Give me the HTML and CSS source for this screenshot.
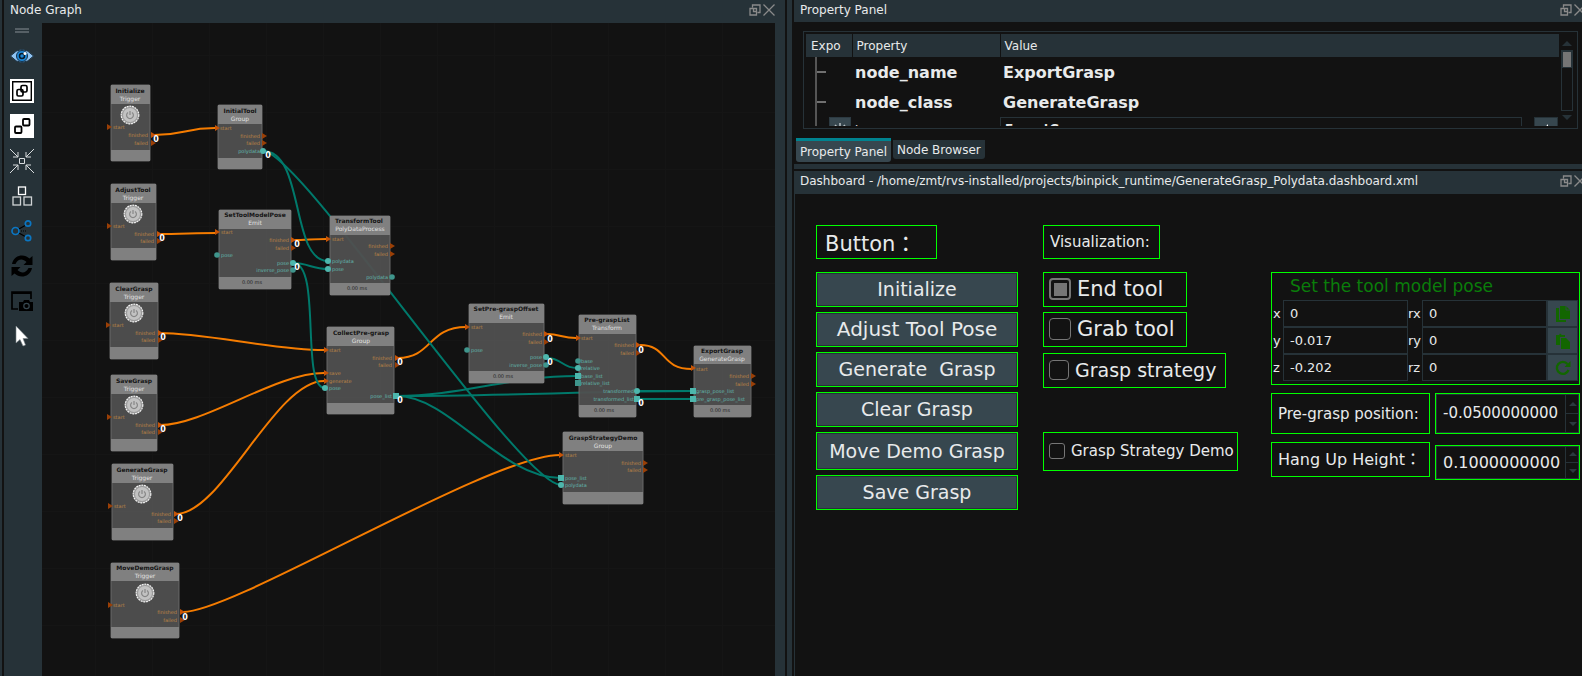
FILE: index.html
```html
<!DOCTYPE html>
<html lang="en">
<head>
<meta charset="utf-8">
<title>Node Graph</title>
<link rel="stylesheet" href="styles.css">
</head>
<body>
<svg class="defs" aria-hidden="true">
  <defs>
    <symbol id="float" viewBox="0 0 12 12"><path d="M3.500 3.500V1H11V8.500H8.500M1 4.500H7.500V11H1ZM4.500 4V7.500H8" /></symbol>
    <symbol id="close" viewBox="0 0 12 12"><path d="M.5 .5 11.500 11.500M11.500 .5 .5 11.500" /></symbol>
  </defs>
</svg>
<div class="app">
  <section class="graph-dock">
    <header class="dock-title">
      <h2>Node Graph</h2>
      <button class="icon-btn" aria-label="Float"><svg><use href="#float"/></svg></button>
      <button class="icon-btn" aria-label="Close"><svg><use href="#close"/></svg></button>
    </header>
    <div class="graph-body">
      <nav class="toolbar" aria-label="Graph tools">
        <span class="handle"></span>
        <button class="tool" aria-label="Show">
          <svg viewBox="0 0 24 24"><path d="M.5 12Q12-1 23.500 12 12 25 .5 12Z" fill="#8fc3f2" stroke="#1d3446"/><circle cx="12" cy="12" r="5.500" fill="#1e88d8" stroke="#14314a"/><circle cx="12" cy="12" r="2.500" fill="none" stroke="#0a1a28" stroke-width="1.500"/><circle cx="15" cy="9.500" r="1.500" fill="#fff"/></svg>
        </button>
        <button class="tool" aria-label="Group">
          <svg viewBox="0 0 24 24"><path d="M0 0H24V24H0Z" fill="#fff"/><g fill="none" stroke="#000"><path d="M2.700 2.700H21.300V21.300H2.700Z" stroke-width="1.400"/><rect x="7" y="10.500" width="6" height="6.500" rx="1.500" stroke-width="1.700"/><rect x="11" y="6.500" width="6" height="6.500" rx="1.500" stroke-width="1.700"/></g></svg>
        </button>
        <button class="tool" aria-label="Ungroup">
          <svg viewBox="0 0 24 24"><path d="M0 0H24V24H0Z" fill="#fff"/><g fill="none" stroke="#000" stroke-width="1.800"><rect x="5" y="12.500" width="6.500" height="6.500" rx="1"/><rect x="13" y="5" width="6.500" height="6.500" rx="1"/></g></svg>
        </button>
        <button class="tool" aria-label="Center">
          <svg viewBox="0 0 24 24" fill="none" stroke="#d8dcde"><path d="M9.500 9.500H14.500V14.500H9.500Z"/><path d="M0 0 8 8M24 0 16 8M0 24 8 16M24 24 16 16M8 3V8H3M16 3V8H21M8 21V16H3M16 21V16H21"/></svg>
        </button>
        <button class="tool" aria-label="Arrange">
          <svg viewBox="0 0 24 24" fill="none" stroke="#d0d4d6" stroke-width="1.300"><rect x="8.500" y="3" width="7" height="7.500" stroke="#fff"/><rect x="3" y="13" width="7.500" height="8"/><rect x="14" y="13" width="7.500" height="8"/></svg>
        </button>
        <button class="tool" aria-label="Link">
          <svg viewBox="0 0 24 24" fill="none"><path d="M8 10.500 16 6M8 13.500 16 18" stroke="#000" stroke-width="1.300"/><path d="M9 12H16" stroke="#000" stroke-dasharray="1 1"/><g stroke="#0b76c2" stroke-width="1.700"><circle cx="5.500" cy="12" r="3.500"/><circle cx="18" cy="4.500" r="2.700"/><circle cx="18" cy="19" r="2.700"/></g></svg>
        </button>
        <button class="tool" aria-label="Refresh">
          <svg viewBox="0 0 24 24" fill="#000"><path d="M2 10C3 4 8 1.500 12 1.500 15 1.500 17 2.500 19.500 4.500L22.500 2V11H13.500L16.500 8C13 4.500 8 4.500 5.500 10ZM22 14C21 20 16 22.500 12 22.500 9 22.500 7 21.500 4.500 19.500L1.500 22V13H10.500L7.500 16C11 19.500 16 19.500 18.500 14Z"/></svg>
        </button>
        <button class="tool" aria-label="Capture">
          <svg viewBox="0 0 24 24"><path d="M8 20H2V3H21V10" fill="none" stroke="#000" stroke-width="1.700"/><path d="M2 3H21V5H2Z"/><path d="M9 13H13L14 11H19L20 13H23V22H9Z"/><circle cx="16.500" cy="17" r="2.700" fill="none" stroke="#37474f" stroke-width="1.200"/></svg>
        </button>
        <button class="tool" aria-label="Select">
          <svg viewBox="0 0 24 24"><path d="M6 2V19L10 15.500 13 22 15.500 21 13 14.500H18Z" fill="#fff" stroke="#7b8388" stroke-width=".6"/></svg>
        </button>
      </nav>
      <div class="canvas">
        <svg class="graph" width="733" height="653" viewBox="42 23 733 653" role="img" aria-label="Node graph">
          <defs>
            <pattern id="grid" x="38" y="55" width="57" height="57" patternUnits="userSpaceOnUse"><path d="M0 .5H57M.5 0V57" stroke="#151515" fill="none"/></pattern>
            <g id="arr"><path d="M-2-3 3 0-2 3Z" fill="#9a3f06"/></g>
            <g id="arrOn"><path d="M-2-3 3 0-2 3Z" fill="#c65408"/></g>
            <g id="dot"><circle r="2.800" fill="#3f958c"/></g>
            <g id="dotOn"><circle r="3" fill="#4db6ac"/></g>
            <g id="sq"><path d="M-3-3H3V3H-3Z" fill="#3f958c"/></g>
            <g id="sqOn"><path d="M-3-3H3V3H-3Z" fill="#4db6ac"/></g>
            <g id="power"><circle r="8.800" fill="#9c9c9c" stroke="#f2f2f2" stroke-width="1.200" stroke-dasharray="2 .7"/><circle r="7" fill="#c2c2c2"/><path d="M-2-2.600A3.400 3.400 0 1 0 2-2.600M0-4V0" fill="none" stroke="#868686" stroke-width="1.200"/></g>
          </defs>
          <rect x="42" y="23" width="733" height="653" fill="url(#grid)"/>

          <g class="wire flow">
            <path d="M154 135C185 135 185 128 215 128"/>
            <path d="M159 234C178 234 198 233 216 233"/>
            <path d="M294 240C304 240 316 239 326 239"/>
            <path d="M160 333C205 333 275 350 324 350"/>
            <path d="M160 425C205 425 275 373 324 373"/>
            <path d="M176 514C222 514 275 381 324 381"/>
            <path d="M183 612C235 612 490 455 560 455"/>
            <path d="M398 358C432 358 428 327 466 327"/>
            <path d="M547 334C560 334 562 338 576 338"/>
            <path d="M640 345C668 345 660 369 692 369"/>
          </g>
          <g class="wire data">
            <path d="M263 151C305 151 290 261 328 261"/>
            <path d="M263 151C300 151 520 485 561 485"/>
            <path d="M293 263C308 263 312 269 328 269"/>
            <path d="M293 263C322 263 300 388 325 388"/>
            <path d="M397 396C460 396 510 376 577 376"/>
            <path d="M397 396C500 396 600 391 693 391"/>
            <path d="M397 396C450 396 500 478 561 478"/>
            <path d="M547 358C562 358 562 368 577 368"/>
            <path d="M637 391H693M637 399H693"/>
          </g>

          <g class="node" transform="translate(111 85)">
            <rect class="body" width="39" height="76" rx="1"/><path class="bar" d="M0 0H39V19H0ZM0 65H39V76H0Z"/>
            <text class="name" x="19" y="8">Initialize</text><text class="kind" x="19" y="16">Trigger</text><use href="#power" x="19" y="30"/>
            <text class="in" x="2" y="44">start</text><text class="out" x="37" y="52">finished</text><text class="out" x="37" y="60">failed</text>
          </g>
          <g class="node" transform="translate(111 184)">
            <rect class="body" width="45" height="76" rx="1"/><path class="bar" d="M0 0H45V19H0ZM0 64H45V76H0Z"/>
            <text class="name" x="22" y="8">AdjustTool</text><text class="kind" x="22" y="16">Trigger</text><use href="#power" x="22" y="30"/>
            <text class="in" x="2" y="44">start</text><text class="out" x="43" y="52">finished</text><text class="out" x="43" y="59">failed</text>
          </g>
          <g class="node" transform="translate(110 283)">
            <rect class="body" width="48" height="76" rx="1"/><path class="bar" d="M0 0H48V19H0ZM0 64H48V76H0Z"/>
            <text class="name" x="24" y="8">ClearGrasp</text><text class="kind" x="24" y="16">Trigger</text><use href="#power" x="24" y="30"/>
            <text class="in" x="2" y="44">start</text><text class="out" x="45" y="52">finished</text><text class="out" x="45" y="59">failed</text>
          </g>
          <g class="node" transform="translate(111 375)">
            <rect class="body" width="46" height="76" rx="1"/><path class="bar" d="M0 0H46V19H0ZM0 64H46V76H0Z"/>
            <text class="name" x="23" y="8">SaveGrasp</text><text class="kind" x="23" y="16">Trigger</text><use href="#power" x="23" y="30"/>
            <text class="in" x="2" y="44">start</text><text class="out" x="44" y="52">finished</text><text class="out" x="44" y="59">failed</text>
          </g>
          <g class="node" transform="translate(112 464)">
            <rect class="body" width="61" height="76" rx="1"/><path class="bar" d="M0 0H61V19H0ZM0 64H61V76H0Z"/>
            <text class="name" x="30" y="8">GenerateGrasp</text><text class="kind" x="30" y="16">Trigger</text><use href="#power" x="30" y="30"/>
            <text class="in" x="2" y="44">start</text><text class="out" x="59" y="52">finished</text><text class="out" x="59" y="59">failed</text>
          </g>
          <g class="node" transform="translate(111 563)">
            <rect class="body" width="68" height="75" rx="1"/><path class="bar" d="M0 0H68V18H0ZM0 64H68V75H0Z"/>
            <text class="name" x="34" y="7">MoveDemoGrasp</text><text class="kind" x="34" y="15">Trigger</text><use href="#power" x="34" y="30"/>
            <text class="in" x="2" y="44">start</text><text class="out" x="66" y="51">finished</text><text class="out" x="66" y="59">failed</text>
          </g>
          <g class="node" transform="translate(218 105)">
            <rect class="body" width="44" height="64" rx="1"/><path class="bar" d="M0 0H44V19H0ZM0 53H44V64H0Z"/>
            <text class="name" x="22" y="8">InitialTool</text><text class="kind" x="22" y="16">Group</text>
            <text class="in" x="2" y="25">start</text><text class="out" x="42" y="33">finished</text><text class="out" x="42" y="40">failed</text><text class="out d" x="42" y="48">polydata</text>
          </g>
          <g class="node" transform="translate(219 210)">
            <rect class="body" width="72" height="79" rx="1"/><path class="bar" d="M0 0H72V19H0ZM0 67H72V79H0Z"/>
            <text class="name" x="36" y="7">SetToolModelPose</text><text class="kind" x="36" y="15">Emit</text>
            <text class="in" x="2" y="24">start</text><text class="out" x="70" y="32">finished</text><text class="out" x="70" y="40">failed</text><text class="in d" x="2" y="47">pose</text><text class="out d" x="70" y="55">pose</text><text class="out d" x="70" y="62">inverse_pose</text><text class="time" x="33" y="74">0.00 ms</text>
          </g>
          <g class="node" transform="translate(330 216)">
            <rect class="body" width="60" height="79" rx="1"/><path class="bar" d="M0 0H60V19H0ZM0 67H60V79H0Z"/>
            <text class="name" x="29" y="7">TransformTool</text><text class="kind" x="30" y="15">PolyDataProcess</text>
            <text class="in" x="2" y="25">start</text><text class="out" x="58" y="32">finished</text><text class="out" x="58" y="40">failed</text><text class="in d" x="2" y="47">polydata</text><text class="in d" x="2" y="55">pose</text><text class="out d" x="58" y="63">polydata</text><text class="time" x="27" y="74">0.00 ms</text>
          </g>
          <g class="node" transform="translate(327 327)">
            <rect class="body" width="67" height="87" rx="1"/><path class="bar" d="M0 0H67V19H0ZM0 76H67V87H0Z"/>
            <text class="name" x="34" y="8">CollectPre-grasp</text><text class="kind" x="34" y="16">Group</text>
            <text class="in" x="2" y="25">start</text><text class="out" x="65" y="33">finished</text><text class="out" x="65" y="40">failed</text><text class="in" x="2" y="48">save</text><text class="in" x="2" y="56">generate</text><text class="in d" x="2" y="63">pose</text><text class="out d" x="65" y="71">pose_list</text>
          </g>
          <g class="node" transform="translate(469 304)">
            <rect class="body" width="75" height="79" rx="1"/><path class="bar" d="M0 0H75V19H0ZM0 67H75V79H0Z"/>
            <text class="name" x="37" y="7">SetPre-graspOffset</text><text class="kind" x="37" y="15">Emit</text>
            <text class="in" x="2" y="25">start</text><text class="out" x="73" y="32">finished</text><text class="out" x="73" y="40">failed</text><text class="in d" x="2" y="48">pose</text><text class="out d" x="73" y="55">pose</text><text class="out d" x="73" y="63">inverse_pose</text><text class="time" x="34" y="74">0.00 ms</text>
          </g>
          <g class="node" transform="translate(579 315)">
            <rect class="body" width="57" height="102" rx="1"/><path class="bar" d="M0 0H57V19H0ZM0 90H57V102H0Z"/>
            <text class="name" x="28" y="7">Pre-graspList</text><text class="kind" x="28" y="15">Transform</text>
            <text class="in" x="2" y="25">start</text><text class="out" x="55" y="32">finished</text><text class="out" x="55" y="40">failed</text><text class="in d" x="2" y="48">base</text><text class="in d" x="2" y="55">relative</text><text class="in d" x="2" y="63">base_list</text><text class="in d" x="2" y="70">relative_list</text><text class="out d" x="55" y="78">transformed</text><text class="out d" x="55" y="86">transformed_list</text><text class="time" x="25" y="97">0.00 ms</text>
          </g>
          <g class="node" transform="translate(694 346)">
            <rect class="body" width="57" height="71" rx="1"/><path class="bar" d="M0 0H57V18H0ZM0 59H57V71H0Z"/>
            <text class="name" x="28" y="7">ExportGrasp</text><text class="kind" x="28" y="15">GenerateGrasp</text>
            <text class="in" x="2" y="25">start</text><text class="out" x="55" y="32">finished</text><text class="out" x="55" y="40">failed</text><text class="in d" x="2" y="47">grasp_pose_list</text><text class="in d" x="2" y="55">pre_grasp_pose_list</text><text class="time" x="26" y="66">0.00 ms</text>
          </g>
          <g class="node" transform="translate(563 432)">
            <rect class="body" width="80" height="72" rx="1"/><path class="bar" d="M0 0H80V19H0ZM0 60H80V72H0Z"/>
            <text class="name" x="40" y="8">GraspStrategyDemo</text><text class="kind" x="40" y="16">Group</text>
            <text class="in" x="2" y="25">start</text><text class="out" x="78" y="33">finished</text><text class="out" x="78" y="40">failed</text><text class="in d" x="2" y="48">pose_list</text><text class="in d" x="2" y="55">polydata</text>
          </g>

          <g class="ports">
            <use href="#arr" x="109" y="127"/><use href="#arrOn" x="153" y="135"/><use href="#arr" x="153" y="143"/>
            <use href="#arr" x="109" y="226"/><use href="#arrOn" x="159" y="234"/><use href="#arr" x="159" y="241"/>
            <use href="#arr" x="108" y="325"/><use href="#arrOn" x="160" y="333"/><use href="#arr" x="160" y="340"/>
            <use href="#arr" x="109" y="417"/><use href="#arrOn" x="160" y="425"/><use href="#arr" x="160" y="432"/>
            <use href="#arr" x="110" y="506"/><use href="#arrOn" x="176" y="514"/><use href="#arr" x="176" y="521"/>
            <use href="#arr" x="110" y="605"/><use href="#arrOn" x="182" y="612"/><use href="#arr" x="182" y="620"/>
            <use href="#arrOn" x="217" y="128"/><use href="#arr" x="264" y="136"/><use href="#arr" x="264" y="143"/><use href="#dotOn" x="263" y="151"/>
            <use href="#arrOn" x="217" y="232"/><use href="#arrOn" x="293" y="240"/><use href="#arr" x="293" y="248"/><use href="#dot" x="217" y="255"/><use href="#dotOn" x="293" y="263"/><use href="#dot" x="293" y="270"/>
            <use href="#arrOn" x="328" y="239"/><use href="#arr" x="392" y="246"/><use href="#arr" x="392" y="254"/><use href="#dotOn" x="328" y="261"/><use href="#dotOn" x="328" y="269"/><use href="#dot" x="392" y="277"/>
            <use href="#arrOn" x="326" y="350"/><use href="#arrOn" x="397" y="358"/><use href="#arr" x="397" y="365"/><use href="#arrOn" x="326" y="373"/><use href="#arrOn" x="326" y="381"/><use href="#dotOn" x="325" y="388"/><use href="#sqOn" x="396" y="396"/>
            <use href="#arrOn" x="467" y="327"/><use href="#arrOn" x="546" y="334"/><use href="#arr" x="546" y="342"/><use href="#dot" x="467" y="350"/><use href="#dotOn" x="546" y="357"/><use href="#dot" x="546" y="365"/>
            <use href="#arrOn" x="578" y="338"/><use href="#arrOn" x="638" y="345"/><use href="#arr" x="638" y="353"/><use href="#dot" x="578" y="361"/><use href="#dotOn" x="578" y="368"/><use href="#sqOn" x="578" y="376"/><use href="#sq" x="578" y="383"/><use href="#dotOn" x="637" y="391"/><use href="#sqOn" x="637" y="399"/>
            <use href="#arrOn" x="693" y="368"/><use href="#arr" x="753" y="376"/><use href="#arr" x="753" y="384"/><use href="#sqOn" x="693" y="391"/><use href="#sqOn" x="693" y="399"/>
            <use href="#arrOn" x="561" y="455"/><use href="#arr" x="645" y="463"/><use href="#arr" x="645" y="470"/><use href="#sqOn" x="561" y="478"/><use href="#dotOn" x="561" y="485"/>
          </g>
          <g class="count">
            <text x="156" y="142">0</text><text x="162" y="241">0</text><text x="163" y="340">0</text><text x="163" y="432">0</text><text x="180" y="521">0</text><text x="185" y="620">0</text>
            <text x="268" y="158">0</text><text x="297" y="247">0</text><text x="297" y="270">0</text><text x="400" y="365">0</text><text x="400" y="403">0</text>
            <text x="550" y="342">0</text><text x="550" y="365">0</text><text x="641" y="353">0</text><text x="641" y="406">0</text>
          </g>
        </svg>
      </div>
      <div class="grip"></div>
    </div>
  </section>
  <div class="splitter"></div>

  <main class="right">
    <section class="property-dock">
      <header class="dock-title">
        <h2>Property Panel</h2>
        <button class="icon-btn" aria-label="Float"><svg><use href="#float"/></svg></button>
        <button class="icon-btn" aria-label="Close"><svg><use href="#close"/></svg></button>
      </header>
      <div class="tree">
        <div class="tree-view">
          <table class="props">
            <thead><tr><th class="c-expo">Expo</th><th class="c-prop">Property</th><th>Value</th></tr></thead>
            <tbody>
              <tr><td><span class="branch"></span></td><td>node_name</td><td>ExportGrasp</td></tr>
              <tr><td><span class="branch"></span></td><td>node_class</td><td>GenerateGrasp</td></tr>
              <tr class="cut">
                <td><div class="cut-cell"><span class="branch"></span><button class="gear" aria-label="Expose"><svg viewBox="0 0 14 14"><path d="M7 0V14M0 7H14M2 2 12 12M12 2 2 12" stroke="#b8c0c4" stroke-width="1.500"/></svg></button></div></td>
                <td><span class="small">browser</span></td>
                <td><div class="editor"><input aria-label="browser" value="ExportGrasp"><button aria-label="Browse"><svg viewBox="0 0 12 12"><path d="M3 6 8 0V12Z" fill="#fff"/></svg></button></div></td>
              </tr>
            </tbody>
          </table>
        </div>
        <div class="scroll"><span class="up"></span><div class="track"><span class="thumb"></span></div><span class="down"></span></div>
      </div>
      <nav class="tabs" role="tablist">
        <button class="tab active" role="tab" aria-selected="true">Property Panel</button>
        <button class="tab" role="tab">Node Browser</button>
      </nav>
    </section>
    <div class="hsplit"></div>
    <section class="dash-dock">
      <header class="dock-title">
        <h2>Dashboard - /home/zmt/rvs-installed/projects/binpick_runtime/GenerateGrasp_Polydata.dashboard.xml</h2>
        <button class="icon-btn" aria-label="Float"><svg><use href="#float"/></svg></button>
        <button class="icon-btn" aria-label="Close"><svg><use href="#close"/></svg></button>
      </header>
      <div class="dash">
        <div class="col actions">
          <div class="box heading">Button：</div>
          <button class="box cmd">Initialize</button>
          <button class="box cmd wide">Adjust Tool Pose</button>
          <button class="box cmd">Generate&nbsp; Grasp</button>
          <button class="box cmd">Clear Grasp</button>
          <button class="box cmd tall">Move Demo Grasp</button>
          <button class="box cmd">Save Grasp</button>
        </div>
        <div class="col visual">
          <div class="box label">Visualization:</div>
          <label class="box check large"><input type="checkbox" checked>End tool</label>
          <label class="box check large"><input type="checkbox">Grab tool</label>
          <label class="box check medium"><input type="checkbox">Grasp strategy</label>
          <label class="box check small-check"><input type="checkbox">Grasp Strategy Demo</label>
        </div>
        <div class="col settings">
          <fieldset class="box pose">
            <legend>Set the tool model pose</legend>
            <div class="pose-grid">
              <label for="x">x</label><input id="x" value="0"><label for="rx">rx</label><input id="rx" value="0">
              <button aria-label="Copy"><svg viewBox="0 0 16 16"><path d="M5 0H11L15 4V13H5ZM1 2H4V14H11V16H1Z"/><path d="M11 0V4H15" fill="none" stroke="#37474f" stroke-width=".8"/></svg></button>
              <label for="y">y</label><input id="y" value="-0.017"><label for="ry">ry</label><input id="ry" value="0">
              <button aria-label="Paste"><svg viewBox="0 0 16 16"><path d="M1 2H4L5 .5 7 2H10V4H5V12H1ZM6 5H11L15 9V16H6Z"/></svg></button>
              <label for="z">z</label><input id="z" value="-0.202"><label for="rz">rz</label><input id="rz" value="0">
              <button aria-label="Reset"><svg viewBox="0 0 16 16"><path d="M13.500 10A6 6 0 1 1 12.500 4" fill="none" stroke="#126600" stroke-width="2.400"/><path d="M15.500 1V7H9.500Z"/></svg></button>
            </div>
          </fieldset>
          <div class="field">
            <label class="box label" for="pre">Pre-grasp position:</label>
            <div class="box spin"><input id="pre" value="-0.0500000000"><div class="steps"><button aria-label="Increase"></button><button aria-label="Decrease"></button></div></div>
          </div>
          <div class="field hang">
            <label class="box label" for="hang">Hang Up Height：</label>
            <div class="box spin"><input id="hang" value="0.1000000000"><div class="steps"><button aria-label="Increase"></button><button aria-label="Decrease"></button></div></div>
          </div>
        </div>
      </div>
    </section>
  </main>
</div>
</body>
</html>
```
FILE: styles.css
```css
* { box-sizing: border-box; }
body {
  margin: 0;
  background: #121212;
  color: #e8eaeb;
  font: 12px/16px "DejaVu Sans", "Noto Sans CJK JP", sans-serif;
}
button, input { font: inherit; color: inherit; border: 0; border-radius: 0; padding: 0; margin: 0; background: none; outline: 0; min-width: 0; }
h2 { margin: 0; font-size: 12px; font-weight: normal; flex: 1; white-space: nowrap; }
.defs { position: absolute; width: 0; height: 0; }

.app { display: flex; height: 100vh; overflow: hidden; border-left: 2px solid #263238; }
.graph-dock { flex: 0 0 783px; min-width: 0; padding-left: 2px; display: flex; flex-direction: column; }
.splitter { flex: none; width: 5px; margin: 0 2px; background: #263238; }
.right { flex: 1; min-width: 0; display: flex; flex-direction: column; }

.dock-title { display: flex; align-items: center; height: 23px; flex: none; background: #263238; padding: 0 10px 3px 6px; }
.icon-btn { width: 12px; height: 12px; margin-left: 2px; display: block; }
.icon-btn svg { display: block; width: 12px; height: 12px; fill: none; stroke: #8a8a8a; stroke-width: 1.3; overflow: visible; }
.right .dock-title { padding-right: 0; margin-right: -4px; }

.graph-body { flex: 1; min-height: 0; display: flex; }
.toolbar { width: 38px; flex: none; background: #263238; display: flex; flex-direction: column; align-items: center; gap: 11px; padding: 5px 2px 0 0; }
.handle { width: 14px; height: 5px; border-top: 2px solid #566066; border-bottom: 2px solid #566066; }
.tool { width: 24px; height: 24px; display: block; }
.tool svg { display: block; width: 24px; height: 24px; }
.canvas { flex: 1; min-width: 0; overflow: hidden; }
.graph { display: block; }
.grip { width: 10px; flex: none; background: #263238; }

.wire path { fill: none; stroke-width: 2; }
.flow path { stroke: #f57c00; }
.data path { stroke: #00796b; }
.body { fill: #505050; stroke: #6c6c6c; }
.node rect, .bar { opacity: .95; }
.bar { fill: #838383; }
.node text { font-size: 5px; }
.node .name { font-size: 6px; font-weight: bold; text-anchor: middle; fill: #151515; }
.node .kind { font-size: 6px; text-anchor: middle; fill: #e0e0e0; }
.node .in, .node .out { fill: #bd8545; }
.node .out { text-anchor: end; }
.node .d { fill: #62b8ae; }
.node .time { text-anchor: middle; fill: #222; }
.count { font-size: 8px; font-weight: bold; text-anchor: middle; fill: #fff; }

.property-dock { flex: none; display: flex; flex-direction: column; }
.property-dock .dock-title { height: 22px; }
.tree { margin: 9px 4px 0 9px; height: 98px; border: 1px solid #263238; padding: 2px 4px 2px 2px; display: flex; }
.tree-view { flex: 1; min-width: 0; height: 92px; overflow: hidden; }
.props { width: 100%; border-collapse: collapse; table-layout: fixed; }
.props th { height: 23px; padding: 0 0 0 4px; background: #263238; text-align: left; font-weight: normal; border-left: 1px solid #121212; }
.props th:first-child { padding-left: 5px; border-left: 0; }
.props .c-expo { width: 46px; }
.props .c-prop { width: 148px; }
.props td { height: 30px; padding: 2px 0 0 3px; font-size: 16px; font-weight: bold; white-space: nowrap; }
.props td:first-child { padding: 0 0 0 9px; }
.branch { display: block; width: 11px; height: 30px; border-left: 2px solid #555; background: linear-gradient(#707070, #707070) 0 14px / 100% 2px no-repeat; }
.cut-cell { display: flex; gap: 3px; }
.cut .branch { background: none; }
.gear { width: 22px; height: 26px; background: #37474f; border: 1px solid #2c3a42; display: grid; place-items: center; }
.gear svg { width: 14px; height: 14px; }
.props .cut td { vertical-align: top; }
.small { display: block; padding-top: 4px; font-size: 12px; font-weight: normal; }
.props .cut td:last-child { padding: 0; }
.editor { display: flex; gap: 12px; padding-right: 1px; height: 26px; }
.editor input { flex: 1; border: 1px solid #263238; font-size: 12px; padding-left: 4px; height: 24px; }
.editor button { width: 24px; background: #37474f; border: 1px solid #263238; display: grid; place-items: center; }
.editor svg { width: 12px; height: 12px; }
.scroll { width: 12px; margin-left: 2px; display: flex; flex-direction: column; align-items: center; padding: 7px 0 6px; gap: 4px; }
.up { border: 5px solid transparent; border-top: 0; border-bottom-color: #263238; }
.down { border: 5px solid transparent; border-bottom: 0; border-top-color: #263238; }
.track { flex: 1; width: 12px; border: 1px solid #263238; }
.thumb { display: block; height: 17px; background: #757575; border: 1px solid #263238; }
.tabs { display: flex; align-items: flex-start; gap: 2px; padding: 9px 0 0 2px; height: 35px; }
.tab { background: #263238; padding: 2px 4px 1px; border-radius: 0 0 3px 3px; margin-top: 2px; white-space: nowrap; }
.tab.active { background: #37474f; border-top: 3px solid #00838f; padding: 3px 4px 2px; margin-top: 0; }
.hsplit { flex: none; height: 5px; margin-bottom: 2px; background: #263238; }

.dash-dock { flex: 1; min-height: 0; display: flex; flex-direction: column; border-left: 1px solid #263238; }
.dash-dock .dock-title { padding-left: 5px; }
.dash { display: flex; padding: 31px 2px 0 21px; align-items: flex-start; }
.col { display: flex; flex-direction: column; align-items: flex-start; gap: 5px; flex: none; }
.box { border: 1px solid #00ff00; white-space: nowrap; }
.label { display: flex; align-items: center; padding: 0 6px; font-size: 15px; }
.actions { width: 202px; margin-right: 25px; }
.heading { width: 121px; height: 34px; padding: 1px 0 0 8px; font-size: 21px; line-height: 34px; margin-bottom: 8px; }
.cmd { width: 100%; height: 35px; background: #37474f; box-shadow: inset 0 0 0 1px #263238; font-size: 19px; line-height: 24px; padding-bottom: 1px; }
.wide { font-size: 20px; }
.tall { height: 38px; }
.visual { width: 195px; margin-right: 33px; }
.visual .label { height: 34px; margin-bottom: 8px; width: 117px; }
.check { display: flex; align-items: center; height: 35px; padding: 0 0 1px 5px; gap: 6px; }
.check input { appearance: none; width: 22px; height: 22px; border: 1px solid #767676; border-radius: 4px; }
.check input:checked { border-width: 2px; background: linear-gradient(#757575, #757575) center / 13px 13px no-repeat; }
.large { width: 144px; font-size: 21px; }
.medium { width: 183px; font-size: 19px; margin-top: 1px; }
.medium input { width: 20px; height: 20px; }
.small-check { width: 195px; height: 39px; font-size: 15px; margin-top: 39px; }
.small-check input { width: 16px; height: 16px; border-radius: 3px; }
.settings { flex: 1; min-width: 0; padding-top: 47px; gap: 8px; align-items: stretch; }
.pose { margin: 0; padding: 0 0 3px 1px; min-width: 0; }
.pose legend { float: left; width: 100%; padding: 0 0 1px 17px; font-size: 17px; line-height: 26px; color: #0a7d0a; }
.pose-grid { clear: both; display: grid; grid-template-columns: 10px 1fr 14px 1fr 32px; grid-auto-rows: 27px; font-size: 13px; align-items: center; }
.pose-grid input { height: 27px; border: 1px solid #263238; padding-left: 6px; width: 100%; }
.pose-grid button { height: 27px; margin-right: 1px; background: #37474f; border: 1px solid #263238; display: grid; place-items: center; }
.pose-grid svg { width: 16px; height: 16px; fill: #126600; }
.field { display: flex; gap: 5px; }
.field .label { width: 159px; height: 41px; }
.field .spin { flex: 1; min-width: 0; height: 41px; display: flex; font-size: 15px; box-shadow: inset 0 0 0 1px #263238; }
.spin input { flex: 1; width: 0; padding: 0 0 1px 7px; }
.steps { width: 14px; border-left: 1px solid #263238; display: flex; flex-direction: column; }
.steps button { flex: 1; display: grid; place-items: center; }
.steps button + button { border-top: 1px solid #263238; }
.steps button::before { content: ""; border: 4px solid transparent; border-top: 0; border-bottom-color: #2b383f; }
.steps button + button::before { border-top: 4px solid #2b383f; border-bottom: 0; }
.hang .label { height: 35px; font-size: 16px; }
.hang .spin { height: 35px; font-size: 16px; margin-top: 3px; }
```
